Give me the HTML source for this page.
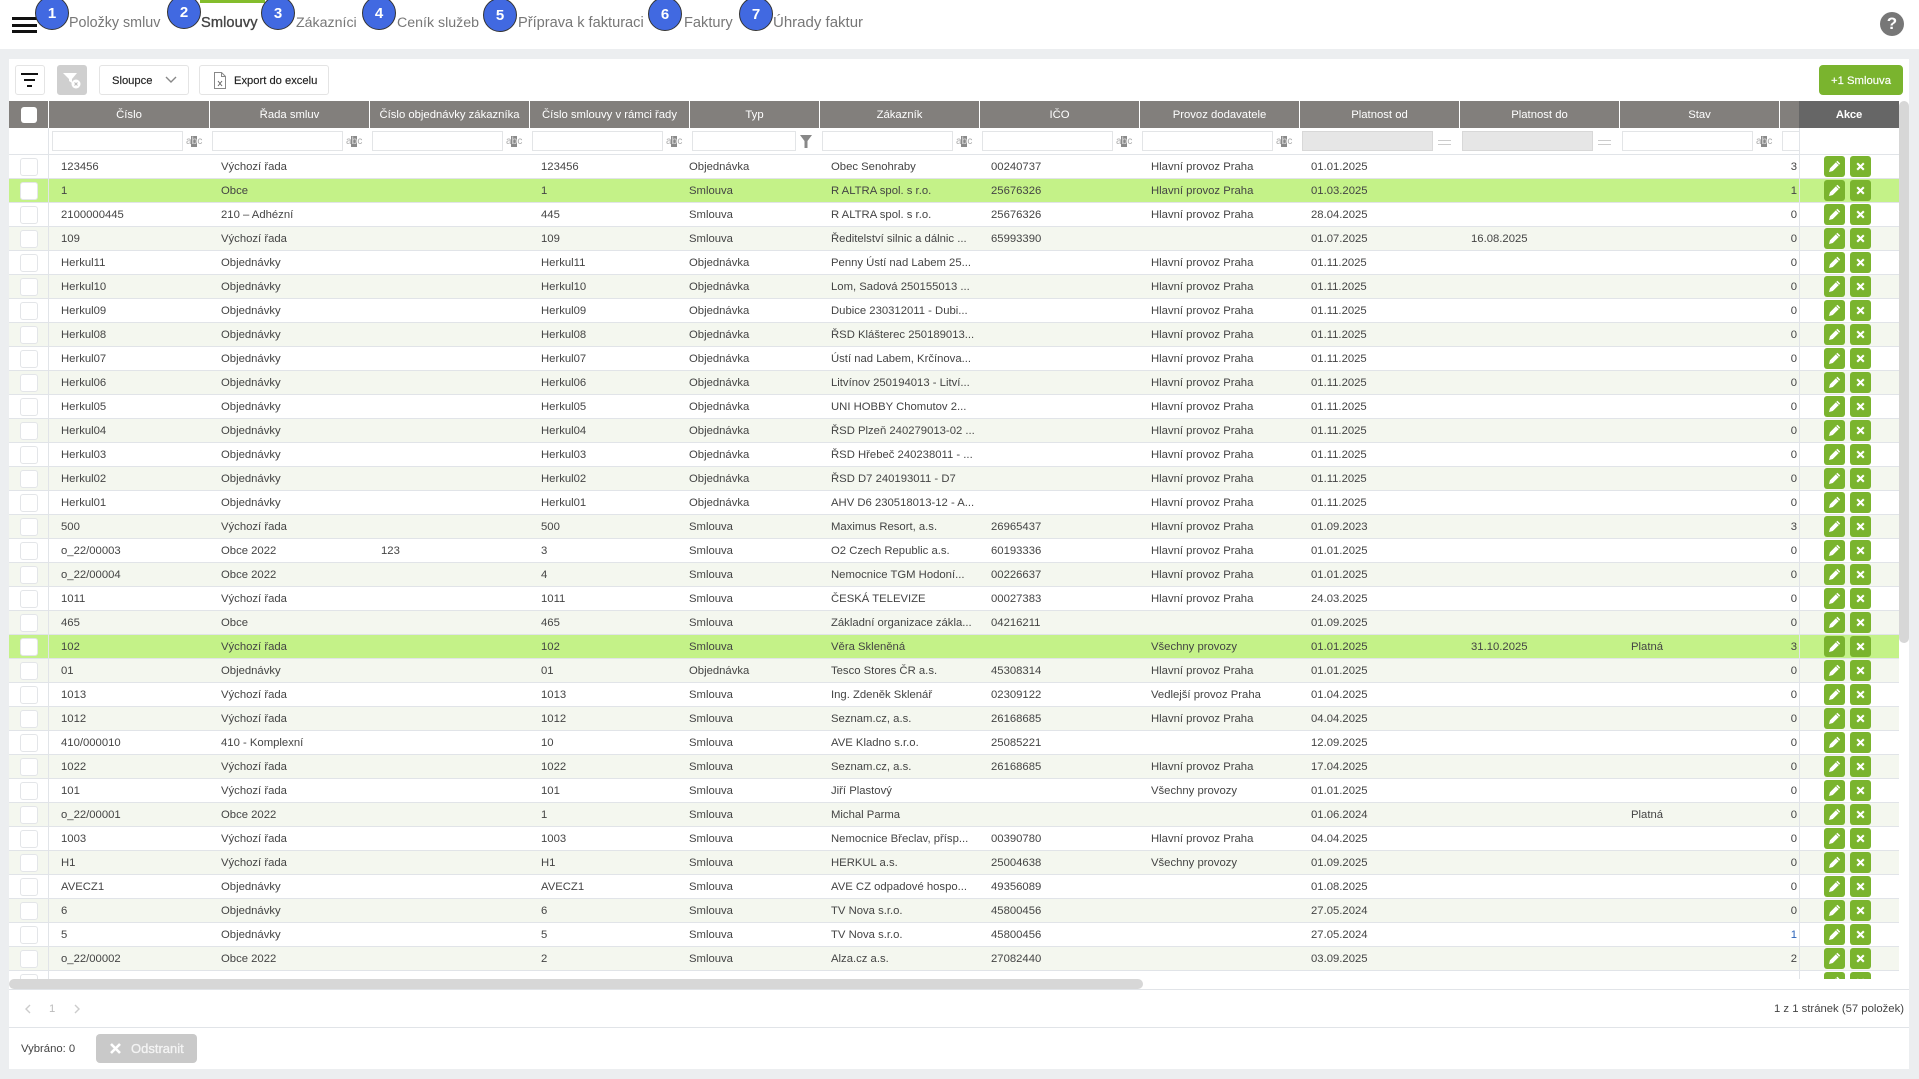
<!DOCTYPE html>
<html lang="cs"><head><meta charset="utf-8"><title>Smlouvy</title>
<style>
*{box-sizing:border-box}
html,body{margin:0;padding:0}
body{width:1919px;height:1079px;overflow:hidden;background:#eceef0;font-family:"Liberation Sans",sans-serif;font-size:11.3px;color:#444;position:relative}
.p{position:absolute}
#top{left:0;top:0;width:1919px;height:49px;background:#fff;overflow:hidden}
.ci{position:absolute;width:34px;height:34px;border-radius:50%;background:#4169e1;border:1.5px solid #333;color:#fff;font-weight:bold;font-size:15px;line-height:33px;text-align:center}
.lb{position:absolute;top:14px;font-size:14.2px;line-height:18px;color:#777;white-space:nowrap}
.bar{position:absolute;left:11.5px;width:25px;height:3px;background:#111}
#panel{left:9px;top:59px;width:1900px;height:1010px;background:#fff}
.btn{position:absolute;top:65px;height:30px;border:1px solid #e4e4e4;border-radius:3px;background:#fff;color:#222;font-size:11.2px;line-height:30px;-webkit-text-stroke:.15px currentColor}
#head{left:9px;top:101px;width:1790px;height:27px;background:#827f7c}
.h{position:absolute;top:101px;height:27px;line-height:29px;color:#fff;text-align:center;border-left:1px solid #fff;white-space:nowrap}
.in{position:absolute;top:131px;height:20px;border:1px solid #e3e5e7;background:#fff}
.in.g{background:#e6e6e6;border-color:#d8d8d8}
.abc{position:absolute;top:136px;width:15px;height:12px;font-size:10px;line-height:12px;color:#aaa;text-align:center;letter-spacing:-.4px;margin-left:-1px}
.abc u{text-decoration:none;background:#8a8a8a;color:#ddd;padding:0 .5px}
.eq{position:absolute;top:140px;width:13px;height:5px;border-top:1px solid #ccc;border-bottom:1px solid #ccc}
#t{left:9px;top:155px;width:1890px;height:824px;overflow:hidden}
.r{position:relative;height:24px;border-bottom:1px solid #e1e4e8;background:#fff;line-height:23px;white-space:nowrap}
.r.s{background:#f4f7ef}.r.z{background:#c4f288}
.r:before{content:"";position:absolute;left:11px;top:3px;width:16px;height:16px;border:1px solid #e3e5e8;border-radius:3px;background:#fff}
.r span{position:absolute;top:1px}
.a{left:52px}.b{left:212px}.c{left:372px}.d{left:532px}.e{left:680px}.f{left:822px}.g{left:982px}.h1{left:1142px}.i{left:1302px}.j{left:1462px}.k{left:1622px}
.r .l{right:102px}
.r svg{position:absolute;left:1815px;top:1px;width:47px;height:21px}
.v{position:absolute;width:1px;background:#e1e4e8}
.hl{position:absolute;height:1px;background:#e1e4e8}
</style></head><body>
<svg width="0" height="0" style="position:absolute"><defs>
<symbol id="ac" viewBox="0 0 47 21"><rect width="21" height="21" rx="3" fill="#7ab42e"/><rect x="26" width="21" height="21" rx="3" fill="#7ab42e"/><path d="M5 16l1-3.8 7.4-7.4 2.8 2.8L8.8 15z" fill="#fff"/><path d="M12.2 6.2l2.6 2.6" stroke="#7ab42e" stroke-width=".7"/><path d="M33.2 7.2l6.6 6.6M39.8 7.2l-6.6 6.6" stroke="#fff" stroke-width="2.1" fill="none"/></symbol>
</defs></svg>

<div id="top" class="p">
<div class="bar" style="top:17px"></div><div class="bar" style="top:23.5px"></div><div class="bar" style="top:30px"></div>
<div class="ci" style="left:35px;top:-4px">1</div><div class="lb" style="left:69px;font-size:14.3px">Položky smluv</div>
<div class="p" style="left:200px;top:0;width:65px;height:3px;background:#84bd2c"></div>
<div class="ci" style="left:167px;top:-5px">2</div><div class="lb" style="left:201px;font-size:14.6px;color:#444;-webkit-text-stroke:.35px #444;letter-spacing:.1px">Smlouvy</div>
<div class="ci" style="left:261px;top:-4px">3</div><div class="lb" style="left:296px">Zákazníci</div>
<div class="ci" style="left:362px;top:-4px">4</div><div class="lb" style="left:397px">Ceník služeb</div>
<div class="ci" style="left:483px;top:-2px">5</div><div class="lb" style="left:518px;font-size:14.6px">Příprava k fakturaci</div>
<div class="ci" style="left:648px;top:-3px">6</div><div class="lb" style="left:684px;font-size:14.6px">Faktury</div>
<div class="ci" style="left:739px;top:-3px">7</div><div class="lb" style="left:773px;font-size:15px">Úhrady faktur</div>
<div class="p" style="left:1880px;top:12px;width:24px;height:24px;border-radius:50%;background:#777;color:#fff;font-weight:bold;font-size:17px;line-height:24px;text-align:center">?</div>
</div>

<div id="panel" class="p"></div>

<div class="btn" style="left:15px;width:30px"><svg class="p" style="left:5px;top:7px" width="17" height="14"><rect width="17" height="2" fill="#111"/><rect x="3" y="6" width="11" height="2" fill="#111"/><rect x="6" y="12" width="5" height="2" fill="#111"/></svg></div>
<div class="btn" style="left:57px;width:30px;background:#cfcfcf;border-color:#cfcfcf"><svg class="p" style="left:5px;top:6px" width="21" height="18"><path d="M0 1h14l-5 6v4L6 9V7z" fill="#fff"/><circle cx="13" cy="12" r="4.5" fill="#fff"/><path d="M11.5 10.5l3 3m0-3l-3 3" stroke="#bbb" stroke-width="1"/></svg></div>
<div class="btn" style="left:99px;width:90px;padding-left:12px">Sloupce<svg class="p" style="left:65px;top:10px" width="12" height="8"><path d="M1 1l5 5 5-5" stroke="#888" stroke-width="1.4" fill="none"/></svg></div>
<div class="btn" style="left:199px;width:130px;padding-left:34px">Export do excelu<svg class="p" style="left:14px;top:6px" width="12" height="17"><path d="M.5.5h7l4 4v12H.5z" fill="#fff" stroke="#888"/><path d="M7.5.5v4h4" fill="none" stroke="#888"/><path d="M4 9l4 5m0-5l-4 5" stroke="#666"/></svg></div>
<div class="btn" style="left:1819px;width:84px;background:#7ab42e;border-color:#7ab42e;color:#fff;text-align:center;font-size:11.3px;border-radius:4px">+1 Smlouva</div>

<div id="head" class="p"></div>
<div class="p" style="left:1799px;top:101px;width:100px;height:27px;background:#666;color:#fff;font-weight:bold;text-align:center;line-height:29px;letter-spacing:-.2px;z-index:3">Akce</div>
<div class="p" style="left:21px;top:107px;width:16px;height:16px;background:#fff;border-radius:3px"></div>
<div class="h" style="left:48px;width:161px">Číslo</div>
<div class="h" style="left:209px;width:160px">Řada smluv</div>
<div class="h" style="left:369px;width:160px">Číslo objednávky zákazníka</div>
<div class="h" style="left:529px;width:160px">Číslo smlouvy v rámci řady</div>
<div class="h" style="left:689px;width:130px">Typ</div>
<div class="h" style="left:819px;width:160px">Zákazník</div>
<div class="h" style="left:979px;width:160px">IČO</div>
<div class="h" style="left:1139px;width:160px">Provoz dodavatele</div>
<div class="h" style="left:1299px;width:160px">Platnost od</div>
<div class="h" style="left:1459px;width:160px">Platnost do</div>
<div class="h" style="left:1619px;width:160px">Stav</div>
<div class="h" style="left:1779px;width:20px"></div>

<div class="in" style="left:52px;width:131px"></div><div class="abc" style="left:187px">a<u>b</u>c</div>
<div class="in" style="left:212px;width:131px"></div><div class="abc" style="left:347px">a<u>b</u>c</div>
<div class="in" style="left:372px;width:131px"></div><div class="abc" style="left:507px">a<u>b</u>c</div>
<div class="in" style="left:532px;width:131px"></div><div class="abc" style="left:667px">a<u>b</u>c</div>
<div class="in" style="left:692px;width:104px"></div><svg class="p" style="left:800px;top:135px" width="12" height="13"><path d="M0 0h12L7.5 6v7h-3V6z" fill="#888"/></svg>
<div class="in" style="left:822px;width:131px"></div><div class="abc" style="left:957px">a<u>b</u>c</div>
<div class="in" style="left:982px;width:131px"></div><div class="abc" style="left:1117px">a<u>b</u>c</div>
<div class="in" style="left:1142px;width:131px"></div><div class="abc" style="left:1277px">a<u>b</u>c</div>
<div class="in g" style="left:1302px;width:131px"></div><div class="eq" style="left:1438px"></div>
<div class="in g" style="left:1462px;width:131px"></div><div class="eq" style="left:1598px"></div>
<div class="in" style="left:1622px;width:131px"></div><div class="abc" style="left:1757px">a<u>b</u>c</div>
<div class="in" style="left:1782px;width:17px;border-right:0"></div>
<div class="hl" style="left:9px;top:154px;width:1890px;height:1px"></div>

<div id="t" class="p">
<div class="r"><span class="a">123456</span><span class="b">Výchozí řada</span><span class="d">123456</span><span class="e">Objednávka</span><span class="f">Obec Senohraby</span><span class="g">00240737</span><span class="h1">Hlavní provoz Praha</span><span class="i">01.01.2025</span><span class="l">3</span><svg><use href="#ac"/></svg></div>
<div class="r z"><span class="a">1</span><span class="b">Obce</span><span class="d">1</span><span class="e">Smlouva</span><span class="f">R ALTRA spol. s r.o.</span><span class="g">25676326</span><span class="h1">Hlavní provoz Praha</span><span class="i">01.03.2025</span><span class="l">1</span><svg><use href="#ac"/></svg></div>
<div class="r"><span class="a">2100000445</span><span class="b">210 – Adhézní</span><span class="d">445</span><span class="e">Smlouva</span><span class="f">R ALTRA spol. s r.o.</span><span class="g">25676326</span><span class="h1">Hlavní provoz Praha</span><span class="i">28.04.2025</span><span class="l">0</span><svg><use href="#ac"/></svg></div>
<div class="r s"><span class="a">109</span><span class="b">Výchozí řada</span><span class="d">109</span><span class="e">Smlouva</span><span class="f">Ředitelství silnic a dálnic ...</span><span class="g">65993390</span><span class="i">01.07.2025</span><span class="j">16.08.2025</span><span class="l">0</span><svg><use href="#ac"/></svg></div>
<div class="r"><span class="a">Herkul11</span><span class="b">Objednávky</span><span class="d">Herkul11</span><span class="e">Objednávka</span><span class="f">Penny Ústí nad Labem 25...</span><span class="h1">Hlavní provoz Praha</span><span class="i">01.11.2025</span><span class="l">0</span><svg><use href="#ac"/></svg></div>
<div class="r s"><span class="a">Herkul10</span><span class="b">Objednávky</span><span class="d">Herkul10</span><span class="e">Objednávka</span><span class="f">Lom, Sadová 250155013 ...</span><span class="h1">Hlavní provoz Praha</span><span class="i">01.11.2025</span><span class="l">0</span><svg><use href="#ac"/></svg></div>
<div class="r"><span class="a">Herkul09</span><span class="b">Objednávky</span><span class="d">Herkul09</span><span class="e">Objednávka</span><span class="f">Dubice 230312011 - Dubi...</span><span class="h1">Hlavní provoz Praha</span><span class="i">01.11.2025</span><span class="l">0</span><svg><use href="#ac"/></svg></div>
<div class="r s"><span class="a">Herkul08</span><span class="b">Objednávky</span><span class="d">Herkul08</span><span class="e">Objednávka</span><span class="f">ŘSD Klášterec 250189013...</span><span class="h1">Hlavní provoz Praha</span><span class="i">01.11.2025</span><span class="l">0</span><svg><use href="#ac"/></svg></div>
<div class="r"><span class="a">Herkul07</span><span class="b">Objednávky</span><span class="d">Herkul07</span><span class="e">Objednávka</span><span class="f">Ústí nad Labem, Krčínova...</span><span class="h1">Hlavní provoz Praha</span><span class="i">01.11.2025</span><span class="l">0</span><svg><use href="#ac"/></svg></div>
<div class="r s"><span class="a">Herkul06</span><span class="b">Objednávky</span><span class="d">Herkul06</span><span class="e">Objednávka</span><span class="f">Litvínov 250194013 - Litví...</span><span class="h1">Hlavní provoz Praha</span><span class="i">01.11.2025</span><span class="l">0</span><svg><use href="#ac"/></svg></div>
<div class="r"><span class="a">Herkul05</span><span class="b">Objednávky</span><span class="d">Herkul05</span><span class="e">Objednávka</span><span class="f">UNI HOBBY Chomutov 2...</span><span class="h1">Hlavní provoz Praha</span><span class="i">01.11.2025</span><span class="l">0</span><svg><use href="#ac"/></svg></div>
<div class="r s"><span class="a">Herkul04</span><span class="b">Objednávky</span><span class="d">Herkul04</span><span class="e">Objednávka</span><span class="f">ŘSD Plzeň 240279013-02 ...</span><span class="h1">Hlavní provoz Praha</span><span class="i">01.11.2025</span><span class="l">0</span><svg><use href="#ac"/></svg></div>
<div class="r"><span class="a">Herkul03</span><span class="b">Objednávky</span><span class="d">Herkul03</span><span class="e">Objednávka</span><span class="f">ŘSD Hřebeč 240238011 - ...</span><span class="h1">Hlavní provoz Praha</span><span class="i">01.11.2025</span><span class="l">0</span><svg><use href="#ac"/></svg></div>
<div class="r s"><span class="a">Herkul02</span><span class="b">Objednávky</span><span class="d">Herkul02</span><span class="e">Objednávka</span><span class="f">ŘSD D7 240193011 - D7</span><span class="h1">Hlavní provoz Praha</span><span class="i">01.11.2025</span><span class="l">0</span><svg><use href="#ac"/></svg></div>
<div class="r"><span class="a">Herkul01</span><span class="b">Objednávky</span><span class="d">Herkul01</span><span class="e">Objednávka</span><span class="f">AHV D6 230518013-12 - A...</span><span class="h1">Hlavní provoz Praha</span><span class="i">01.11.2025</span><span class="l">0</span><svg><use href="#ac"/></svg></div>
<div class="r s"><span class="a">500</span><span class="b">Výchozí řada</span><span class="d">500</span><span class="e">Smlouva</span><span class="f">Maximus Resort, a.s.</span><span class="g">26965437</span><span class="h1">Hlavní provoz Praha</span><span class="i">01.09.2023</span><span class="l">3</span><svg><use href="#ac"/></svg></div>
<div class="r"><span class="a">o_22/00003</span><span class="b">Obce 2022</span><span class="c">123</span><span class="d">3</span><span class="e">Smlouva</span><span class="f">O2 Czech Republic a.s.</span><span class="g">60193336</span><span class="h1">Hlavní provoz Praha</span><span class="i">01.01.2025</span><span class="l">0</span><svg><use href="#ac"/></svg></div>
<div class="r s"><span class="a">o_22/00004</span><span class="b">Obce 2022</span><span class="d">4</span><span class="e">Smlouva</span><span class="f">Nemocnice TGM Hodoní...</span><span class="g">00226637</span><span class="h1">Hlavní provoz Praha</span><span class="i">01.01.2025</span><span class="l">0</span><svg><use href="#ac"/></svg></div>
<div class="r"><span class="a">1011</span><span class="b">Výchozí řada</span><span class="d">1011</span><span class="e">Smlouva</span><span class="f">ČESKÁ TELEVIZE</span><span class="g">00027383</span><span class="h1">Hlavní provoz Praha</span><span class="i">24.03.2025</span><span class="l">0</span><svg><use href="#ac"/></svg></div>
<div class="r s"><span class="a">465</span><span class="b">Obce</span><span class="d">465</span><span class="e">Smlouva</span><span class="f">Základní organizace zákla...</span><span class="g">04216211</span><span class="i">01.09.2025</span><span class="l">0</span><svg><use href="#ac"/></svg></div>
<div class="r z"><span class="a">102</span><span class="b">Výchozí řada</span><span class="d">102</span><span class="e">Smlouva</span><span class="f">Věra Skleněná</span><span class="h1">Všechny provozy</span><span class="i">01.01.2025</span><span class="j">31.10.2025</span><span class="k">Platná</span><span class="l">3</span><svg><use href="#ac"/></svg></div>
<div class="r s"><span class="a">01</span><span class="b">Objednávky</span><span class="d">01</span><span class="e">Objednávka</span><span class="f">Tesco Stores ČR a.s.</span><span class="g">45308314</span><span class="h1">Hlavní provoz Praha</span><span class="i">01.01.2025</span><span class="l">0</span><svg><use href="#ac"/></svg></div>
<div class="r"><span class="a">1013</span><span class="b">Výchozí řada</span><span class="d">1013</span><span class="e">Smlouva</span><span class="f">Ing. Zdeněk Sklenář</span><span class="g">02309122</span><span class="h1">Vedlejší provoz Praha</span><span class="i">01.04.2025</span><span class="l">0</span><svg><use href="#ac"/></svg></div>
<div class="r s"><span class="a">1012</span><span class="b">Výchozí řada</span><span class="d">1012</span><span class="e">Smlouva</span><span class="f">Seznam.cz, a.s.</span><span class="g">26168685</span><span class="h1">Hlavní provoz Praha</span><span class="i">04.04.2025</span><span class="l">0</span><svg><use href="#ac"/></svg></div>
<div class="r"><span class="a">410/000010</span><span class="b">410 - Komplexní</span><span class="d">10</span><span class="e">Smlouva</span><span class="f">AVE Kladno s.r.o.</span><span class="g">25085221</span><span class="i">12.09.2025</span><span class="l">0</span><svg><use href="#ac"/></svg></div>
<div class="r s"><span class="a">1022</span><span class="b">Výchozí řada</span><span class="d">1022</span><span class="e">Smlouva</span><span class="f">Seznam.cz, a.s.</span><span class="g">26168685</span><span class="h1">Hlavní provoz Praha</span><span class="i">17.04.2025</span><span class="l">0</span><svg><use href="#ac"/></svg></div>
<div class="r"><span class="a">101</span><span class="b">Výchozí řada</span><span class="d">101</span><span class="e">Smlouva</span><span class="f">Jiří Plastový</span><span class="h1">Všechny provozy</span><span class="i">01.01.2025</span><span class="l">0</span><svg><use href="#ac"/></svg></div>
<div class="r s"><span class="a">o_22/00001</span><span class="b">Obce 2022</span><span class="d">1</span><span class="e">Smlouva</span><span class="f">Michal Parma</span><span class="i">01.06.2024</span><span class="k">Platná</span><span class="l">0</span><svg><use href="#ac"/></svg></div>
<div class="r"><span class="a">1003</span><span class="b">Výchozí řada</span><span class="d">1003</span><span class="e">Smlouva</span><span class="f">Nemocnice Břeclav, přísp...</span><span class="g">00390780</span><span class="h1">Hlavní provoz Praha</span><span class="i">04.04.2025</span><span class="l">0</span><svg><use href="#ac"/></svg></div>
<div class="r s"><span class="a">H1</span><span class="b">Výchozí řada</span><span class="d">H1</span><span class="e">Smlouva</span><span class="f">HERKUL a.s.</span><span class="g">25004638</span><span class="h1">Všechny provozy</span><span class="i">01.09.2025</span><span class="l">0</span><svg><use href="#ac"/></svg></div>
<div class="r"><span class="a">AVECZ1</span><span class="b">Objednávky</span><span class="d">AVECZ1</span><span class="e">Smlouva</span><span class="f">AVE CZ odpadové hospo...</span><span class="g">49356089</span><span class="i">01.08.2025</span><span class="l">0</span><svg><use href="#ac"/></svg></div>
<div class="r s"><span class="a">6</span><span class="b">Objednávky</span><span class="d">6</span><span class="e">Smlouva</span><span class="f">TV Nova s.r.o.</span><span class="g">45800456</span><span class="i">27.05.2024</span><span class="l">0</span><svg><use href="#ac"/></svg></div>
<div class="r"><span class="a">5</span><span class="b">Objednávky</span><span class="d">5</span><span class="e">Smlouva</span><span class="f">TV Nova s.r.o.</span><span class="g">45800456</span><span class="i">27.05.2024</span><span class="l" style="color:#2a62b8">1</span><svg><use href="#ac"/></svg></div>
<div class="r s"><span class="a">o_22/00002</span><span class="b">Obce 2022</span><span class="d">2</span><span class="e">Smlouva</span><span class="f">Alza.cz a.s.</span><span class="g">27082440</span><span class="i">03.09.2025</span><span class="l">2</span><svg><use href="#ac"/></svg></div>
<div class="r"><svg><use href="#ac"/></svg></div>
</div>

<div class="v" style="left:48px;top:128px;height:851px"></div>
<div class="v" style="left:1799px;top:128px;height:851px"></div>

<div class="p" style="left:1899px;top:101px;width:10px;height:542px;background:#d7d7d7;border-radius:5px"></div>
<div class="p" style="left:9px;top:979px;width:1134px;height:10px;background:#d7d7d7;border-radius:5px"></div>
<div class="hl" style="left:9px;top:989px;width:1900px"></div>
<svg class="p" style="left:24px;top:1004px" width="8" height="10"><path d="M6 1L2 5l4 4" stroke="#ccc" stroke-width="1.4" fill="none"/></svg>
<div class="p" style="left:49px;top:1001px;line-height:16px;color:#bbb">1</div>
<svg class="p" style="left:73px;top:1004px" width="8" height="10"><path d="M2 1l4 4-4 4" stroke="#ccc" stroke-width="1.4" fill="none"/></svg>
<div class="p" style="right:15px;top:1001px;line-height:16px">1 z 1 stránek (57 položek)</div>
<div class="hl" style="left:9px;top:1027px;width:1900px"></div>
<div class="p" style="left:21px;top:1041px;line-height:16px">Vybráno: 0</div>
<div class="p" style="left:96px;top:1034px;width:101px;height:29px;background:#c9c9c9;border-radius:4px;color:#f4f4f4;font-size:13px;-webkit-text-stroke:.3px #f4f4f4;line-height:29px;padding-left:35px">Odstranit<svg class="p" style="left:14px;top:9px" width="11" height="11"><path d="M1 1l9 9m0-9l-9 9" stroke="#fff" stroke-width="2.6"/></svg></div>
</body></html>
